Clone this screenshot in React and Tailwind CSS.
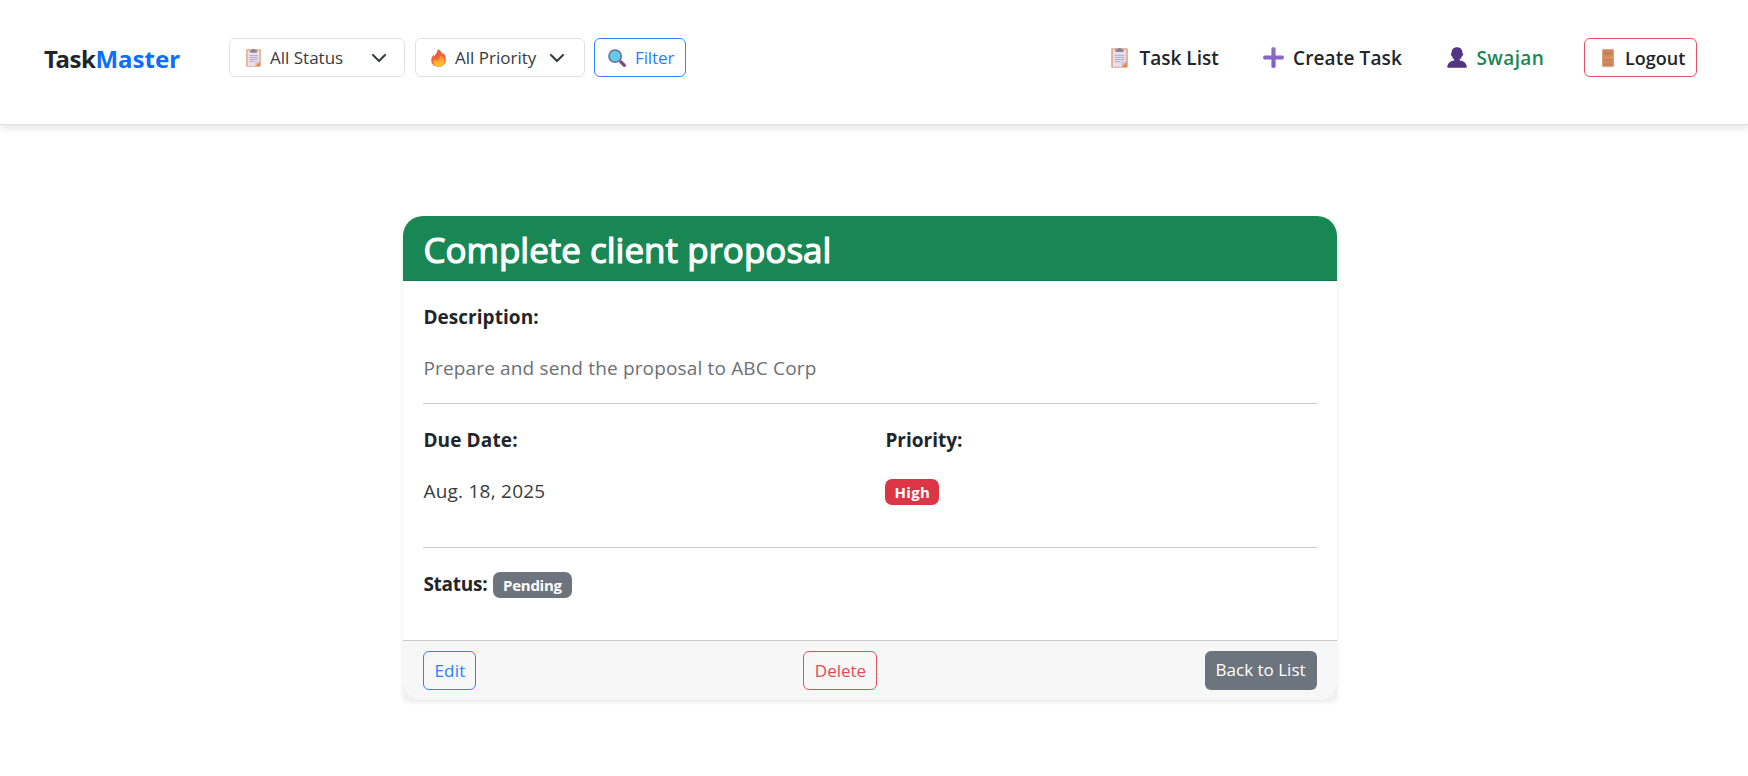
import React from "react";

function ClipboardIcon({ className }) {
  return (
    <svg className={className} viewBox="0 0 17 20" preserveAspectRatio="none">
      <rect x="0.2" y="0.3" width="16.6" height="19.4" rx="0.8" fill="#e2a580" />
      <path d="M1.8 1.6h13.4v12.2L10.4 18.8H1.8z" fill="#e9e1f0" />
      <path d="M10.4 18.8v-3.6c0-.9.5-1.4 1.4-1.4h3.4z" fill="#cdbfdd" />
      <path d="M11.2 18.9l4.2-4.3v4.3z" fill="#e8823f" />
      <path d="M4.3 1.3h2.1C6.5.4 7.3 0 8.5 0s2 .4 2.1 1.3h2.1v1.5c0 .8-.5 1.3-1.3 1.3H5.6c-.8 0-1.3-.5-1.3-1.3z" fill="#8d8494" />
      <path d="M3.6 7.3h9.8M3.6 9.4h9.8M3.6 11.6h9.8M3.6 13.8h6" stroke="#aaa0b6" strokeWidth="0.9" />
    </svg>
  );
}

function FireIcon({ className }) {
  return (
    <svg className={className} viewBox="0 0 15 19" preserveAspectRatio="none">
      <defs>
        <linearGradient id="flame" x1="0" y1="0" x2="0.2" y2="1">
          <stop offset="0" stopColor="#e9533c" />
          <stop offset="0.6" stopColor="#f0683a" />
          <stop offset="1" stopColor="#f58a3a" />
        </linearGradient>
        <linearGradient id="core" x1="0" y1="0" x2="0" y2="1">
          <stop offset="0" stopColor="#fb8f2e" />
          <stop offset="1" stopColor="#ffc52e" />
        </linearGradient>
      </defs>
      <path d="M6.6.2c2.6 1 4.1 2.8 4.6 5.3.4-.6.6-1.3.6-2 2 2.400 3.100 5 3.100 8 0 4.400-3 7.300-7.400 7.300C3 18.800.2 16 .2 12.200c0-3 1.300-4.900 2.600-6.500.1 1 .3 1.700.8 2.300C4 5 6.800 4 6.600.2z" fill="url(#flame)" />
      <path d="M9.400 6.600c2.600 2.200 4 4.400 4 6.800 0 3-2.200 4.900-5.500 4.900-3.300 0-5.300-1.800-5.300-4.300 0-1.200.4-2.200 1.200-3.200.4 1 .9 1.500 1.700 1.700 2.200-1.200 3.800-3 3.900-5.900z" fill="url(#core)" />
    </svg>
  );
}

function SearchIcon({ className }) {
  return (
    <svg className={className} viewBox="0 0 18 18">
      <path d="M11.200 11.200l2.400 2.400" stroke="#8a7f99" strokeWidth="1.600" />
      <path d="M13 13l3.300 3.300" stroke="#87458a" strokeWidth="3.300" strokeLinecap="round" />
      <circle cx="7.100" cy="7.100" r="6.200" fill="#62cbea" stroke="#6a6a9c" strokeWidth="1.500" />
    </svg>
  );
}

function PlusIcon({ className }) {
  return (
    <svg className={className} viewBox="0 0 21 21">
      <defs>
        <linearGradient id="plus" x1="0" y1="0" x2="0" y2="1">
          <stop offset="0" stopColor="#8d76bd" />
          <stop offset="1" stopColor="#8255cf" />
        </linearGradient>
      </defs>
      <path d="M8.400 1.700C8.400.7 9 .2 9.900.2h1.200c.9 0 1.500.5 1.500 1.500v6.700h6.700c1 0 1.500.6 1.500 1.500v1.200c0 .9-.5 1.500-1.500 1.500h-6.700v6.700c0 1-.6 1.500-1.500 1.500H9.900c-.9 0-1.500-.5-1.500-1.500v-6.700H1.700c-1 0-1.500-.6-1.500-1.500V9.900c0-.9.5-1.500 1.500-1.500h6.700z" fill="url(#plus)" />
    </svg>
  );
}

function PersonIcon({ className }) {
  return (
    <svg className={className} viewBox="0 0 20 21" preserveAspectRatio="none">
      <path d="M10 .2c3.300 0 5.400 2.100 5.400 5.200v.7c.6.1.8.6.7 1.300-.1.800-.5 1.400-1.100 1.500-.4 1.500-1.100 2.600-2.200 3.300v1.300c3.600.4 6.300 2.300 7 6.100.1.700-.2 1.200-.9 1.200H1.100c-.7 0-1-.5-.9-1.200.7-3.800 3.400-5.700 7-6.100v-1.300C6.100 11.500 5.400 10.400 5 8.900c-.6-.1-1-.7-1.100-1.500-.1-.7.100-1.200.7-1.300v-.7C4.600 2.300 6.700.2 10 .2z" fill="#533585" />
    </svg>
  );
}

function DoorIcon({ className }) {
  return (
    <svg className={className} viewBox="0 0 12 18" preserveAspectRatio="none">
      <rect x="0.200" y="0.200" width="11.600" height="17.600" rx="0.800" fill="#cc835c" />
      <path d="M1.600 2h8.800v4.600H1.600zM1.600 9.500h8.800v2.800H1.600zM1.600 14.200h8.800v2.200H1.600z" fill="#c87c55" stroke="#dd9a70" strokeWidth="0.500" />
      <path d="M1 8.200h9" stroke="#e89a4e" strokeWidth="0.900" />
      <circle cx="10" cy="8.300" r="0.900" fill="#f7b14e" />
    </svg>
  );
}

function Chevron({ className }) {
  return (
    <svg className={className} viewBox="0 0 14 8" fill="none" stroke="#343a40" strokeWidth="2" strokeLinecap="round" strokeLinejoin="round">
      <path d="M1 1l6 6 6-6" />
    </svg>
  );
}

function Header() {
  return (
    <header className="flex h-[125px] items-start border-b border-[#dee2e6] bg-white pl-[44px] pr-[51px] pt-[38px] shadow-[0_3px_8px_rgba(0,0,0,0.11)]">
      <div className="mt-[2px] w-[185px] shrink-0 font-['Noto_Sans',sans-serif] text-[24px] font-bold leading-[38px]">
        <span className="tracking-[-0.45px]">Task</span>
        <span className="text-[#0d6efd]">Master</span>
      </div>
      <div className="flex h-[39px] items-center text-[17px] leading-[38px] text-[#373b3e]">
        <div className="flex h-[39px] w-[175.500px] items-center rounded-[6px] border border-[#dee2e6] pl-4">
          <ClipboardIcon className="h-[18px] w-[15px]" />
          <span className="ml-[9px] h-[38px] w-[101.500px]">All Status</span>
          <Chevron className="h-[8px] w-[14px]" />
        </div>
        <div className="ml-[10.500px] flex h-[39px] w-[169.500px] items-center rounded-[6px] border border-[#dee2e6] pl-[15px]">
          <FireIcon className="h-[18px] w-[15px]" />
          <span className="ml-[9px] h-[38px] w-[95px]">All Priority</span>
          <Chevron className="h-[8px] w-[14px]" />
        </div>
        <div className="ml-[9.500px] flex h-[39px] w-[91.500px] items-center rounded-[6px] border border-[#0d6efd]/85 pl-[13px] text-[#2780ff]">
          <SearchIcon className="h-[18px] w-[18px]" />
          <span className="ml-[9px] h-[38px] tracking-[-0.1px]">Filter</span>
        </div>
      </div>
      <nav className="ml-auto flex h-[39px] items-center text-[19px] font-semibold leading-[40px]">
        <ClipboardIcon className="h-[20px] w-[17px]" />
        <span className="ml-[12px] w-[123.500px]">Task List</span>
        <PlusIcon className="h-[21px] w-[21px]" />
        <span className="ml-[9px] w-[153.500px] tracking-[0.14px]">Create Task</span>
        <PersonIcon className="h-[21px] w-[20px]" />
        <span className="ml-[10px] w-[107.500px] tracking-[0.4px] text-[#198754]">Swajan</span>
        <div className="flex h-[39px] w-[113px] items-center rounded-[6px] border border-[#dc3545]/85 pl-[17px] text-[18px] leading-[38px]">
          <DoorIcon className="h-[18px] w-[12px]" />
          <span className="ml-[11px] h-[38px]">Logout</span>
        </div>
      </nav>
    </header>
  );
}

function TaskCard() {
  return (
    <main className="ml-[403.4px] mt-[91px] w-[933.2px] rounded-b-[7px] rounded-t-[20px] bg-[#f1f1f1] shadow-[0_2px_5px_rgba(0,0,0,0.09)]">
      <div className="overflow-hidden rounded-[20px] bg-white leading-[26px]">
        <h1 className="h-[65px] border-b border-[#167a4c] bg-[#198754] pl-[20px] pt-[2px] text-[35px] font-medium leading-[64px] text-white [-webkit-text-stroke:1.2px_white]">
          Complete client proposal
        </h1>
        <div className="px-5 pb-[42px] pt-[23px] text-[19px]">
          <h2 className="font-bold tracking-[0.05px]">Description:</h2>
          <p className="mt-[25px] tracking-[0.16px] text-[#6c7074]">Prepare and send the proposal to ABC Corp</p>
          <div className="mt-[22px] h-px bg-[#c8c9ca]" />
          <div className="grid grid-cols-[462px_1fr] pt-[23px]">
            <div>
              <h2 className="font-bold tracking-[0.13px]">Due Date:</h2>
              <p className="mt-[25px] tracking-[0.24px] text-[#373b3e]">Aug. 18, 2025</p>
            </div>
            <div>
              <h2 className="font-bold">Priority:</h2>
              <span className="mt-[25.500px] flex h-[26px] w-[54px] items-center justify-center rounded-[7px] bg-[#dc3545] text-[15px] font-bold tracking-[0.3px] text-white">High</span>
            </div>
          </div>
          <div className="mt-[42px] h-px bg-[#c8c9ca]" />
          <div className="flex pt-[23px]">
            <h2 className="w-[69.500px] font-bold tracking-[-0.25px]">Status:</h2>
            <span className="mt-px flex h-[26px] w-[79px] items-center justify-center rounded-[7px] bg-[#6c757d] text-[15px] font-bold tracking-[-0.26px] text-white">Pending</span>
          </div>
        </div>
        <div className="flex h-[60px] justify-between border-t border-[#c8c9ca] bg-[#f7f7f7] px-5 pt-[10px] text-[17px] leading-[38px]">
          <span className="flex h-[39px] w-[53px] justify-center rounded-[6px] border border-[#0d6efd]/85 tracking-[0.2px] text-[#2780ff]">Edit</span>
          <span className="flex h-[39px] w-[74px] justify-center rounded-[6px] border border-[#dc3545]/85 text-[#e04a58]">Delete</span>
          <span className="flex h-[39px] w-[112px] items-center justify-center rounded-[6px] bg-[#6c757d] text-white">Back to List</span>
        </div>
      </div>
    </main>
  );
}

export default function App() {
  return (
    <div className="min-h-screen bg-white font-['Open_Sans','Noto_Sans',sans-serif] text-[18px] text-[#212529]">
      <Header />
      <TaskCard />
    </div>
  );
}
